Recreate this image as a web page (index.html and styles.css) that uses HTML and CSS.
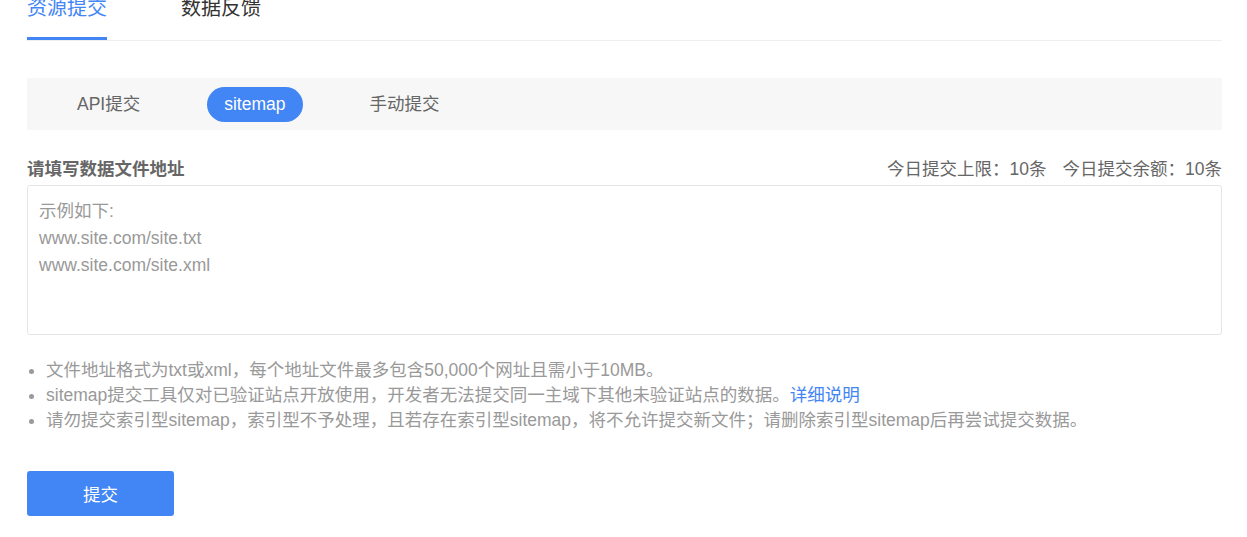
FILE: index.html
```html
<!DOCTYPE html>
<html lang="zh-CN">
<head>
    <meta charset="UTF-8">
    <title>资源提交</title>
    <link rel="stylesheet" href="styles.css">
</head>
<body>
    <div class="tabs">
        <a class="tab active">资源提交</a>
        <a class="tab">数据反馈</a>
    </div>

    <div class="sub-tabs">
        <span class="sub-tab">API提交</span>
        <span class="sub-tab active">sitemap</span>
        <span class="sub-tab">手动提交</span>
    </div>

    <div class="field-head">
        <label class="field-label" for="urls">请填写数据文件地址</label>
        <div class="quota">
            <span>今日提交上限：10条</span>
            <span>今日提交余额：10条</span>
        </div>
    </div>
    <textarea id="urls" class="url-input" placeholder="示例如下:&#10;www.site.com/site.txt&#10;www.site.com/site.xml"></textarea>

    <ul class="tips">
        <li>文件地址格式为txt或xml，每个地址文件最多包含50,000个网址且需小于10MB。</li>
        <li>sitemap提交工具仅对已验证站点开放使用，开发者无法提交同一主域下其他未验证站点的数据。<a href="#" class="link">详细说明</a></li>
        <li>请勿提交索引型sitemap，索引型不予处理，且若存在索引型sitemap，将不允许提交新文件；请删除索引型sitemap后再尝试提交数据。</li>
    </ul>

    <button class="submit">提交</button>
</body>
</html>
```

FILE: styles.css
```css
body {
    margin: 0;
    padding: 0 25px 0 27px;
    font-family: "Liberation Sans", "Noto Sans CJK SC", sans-serif;
    color: #333;
    background-color: #fff;
}
.tabs {
    display: flex;
    gap: 74px;
    margin-top: -2px;
    border-bottom: 1px solid #eee;
}
.tab {
    font-size: 20px;
    line-height: 20px;
    padding-bottom: 19px;
    border-bottom: 3px solid transparent;
    color: #333;
    cursor: pointer;
}
.tab.active {
    color: #4285f4;
    border-bottom-color: #4285f4;
}
.sub-tabs {
    display: flex;
    align-items: center;
    gap: 50px;
    height: 52px;
    margin-top: 37px;
    padding-left: 33px;
    background-color: #f7f7f7;
}
.sub-tab {
    height: 35px;
    line-height: 35px;
    padding: 0 17px;
    border-radius: 18px;
    font-size: 17.5px;
    color: #666;
    cursor: pointer;
}
.sub-tab.active {
    background-color: #4285f4;
    color: #fff;
}
.field-head {
    display: flex;
    justify-content: space-between;
    align-items: center;
    margin-top: 29px;
    height: 20px;
    line-height: 20px;
    font-size: 17.5px;
}
.field-label {
    font-weight: bold;
    color: #666;
}
.quota {
    display: flex;
    gap: 16px;
    color: #666;
}
.url-input {
    display: block;
    box-sizing: border-box;
    width: 100%;
    height: 150px;
    margin-top: 6px;
    padding: 12px 11px;
    border: 1px solid #e5e5e5;
    border-radius: 3px;
    font-family: inherit;
    font-size: 17.5px;
    line-height: 27px;
    color: #333;
    resize: none;
    outline: none;
}
.url-input::placeholder {
    color: #999;
}
.tips {
    margin: 23px 0 0;
    padding-left: 19px;
    font-size: 17.5px;
    line-height: 25px;
    color: #999;
}
.link {
    color: #4285f4;
    text-decoration: none;
}
.submit {
    display: block;
    width: 147px;
    height: 45px;
    margin-top: 38px;
    border: none;
    border-radius: 3px;
    background-color: #4285f4;
    color: #fff;
    font-family: inherit;
    font-size: 17.5px;
    cursor: pointer;
}
```
